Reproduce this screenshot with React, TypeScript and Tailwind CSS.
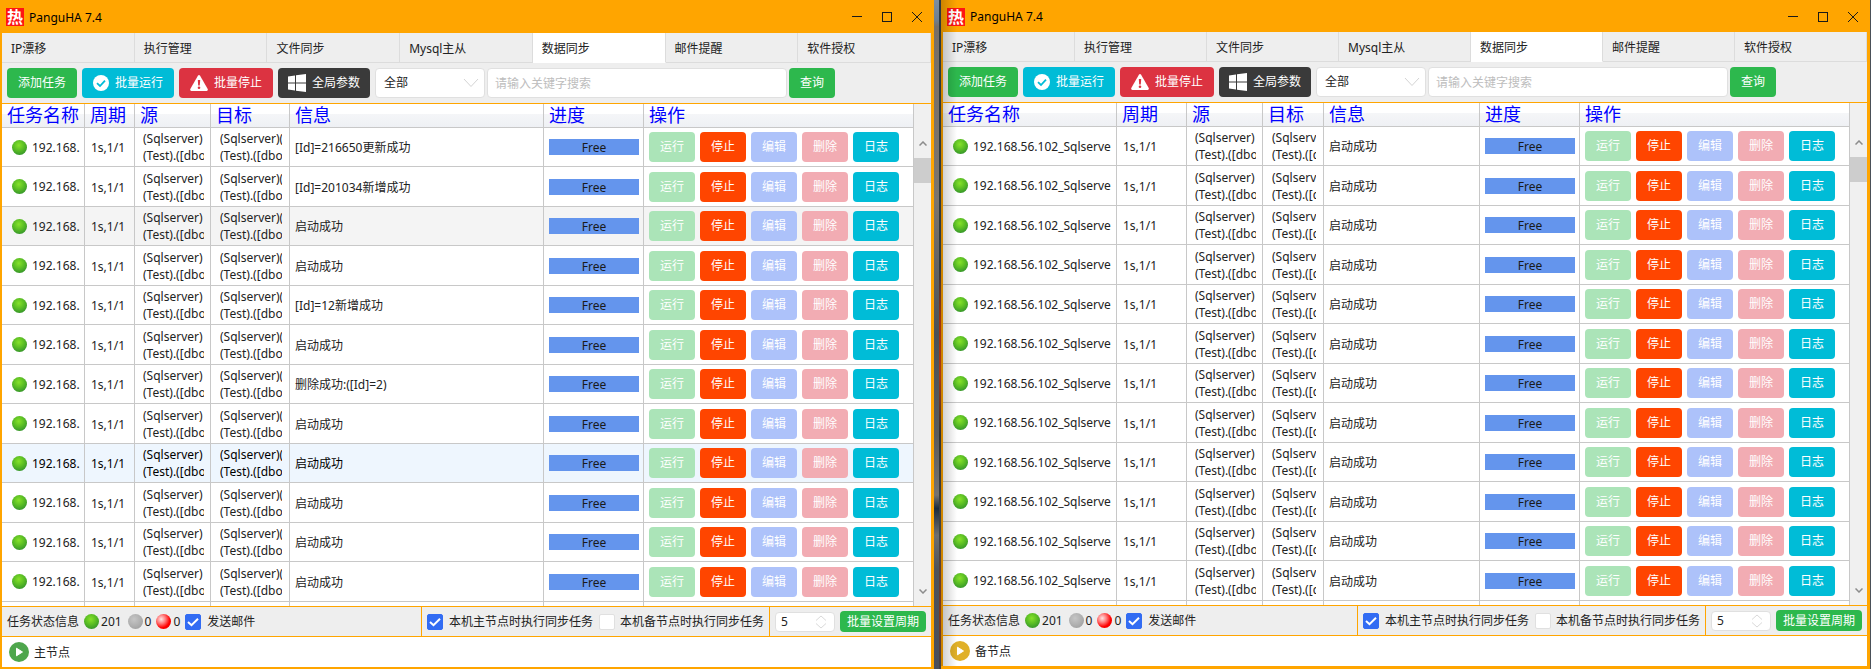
import clsx from "clsx";
import type { ReactNode } from "react";

const TABS = ["IP漂移", "执行管理", "文件同步", "Mysql主从", "数据同步", "邮件提醒", "软件授权"];
const ACTIVE_TAB = "数据同步";
const HEADERS = ["任务名称", "周期", "源", "目标", "信息", "进度", "操作"];

const ACTIONS = [
  { label: "运行", color: "bg-[#abe4b8]" },
  { label: "停止", color: "bg-[#ff4500]" },
  { label: "编辑", color: "bg-[#adc2fa]" },
  { label: "删除", color: "bg-[#f2acb3]" },
  { label: "日志", color: "bg-[#00bcd7]" },
];

const STARTED = "启动成功";

type Row = { info: string; state?: "hover" | "selected" };

const MASTER_ROWS: Row[] = [
  { info: "[Id]=216650更新成功" },
  { info: "[Id]=201034新增成功" },
  { info: STARTED, state: "hover" },
  { info: STARTED },
  { info: "[Id]=12新增成功" },
  { info: STARTED },
  { info: "删除成功:([Id]=2)" },
  { info: STARTED },
  { info: STARTED, state: "selected" },
  { info: STARTED },
  { info: STARTED },
  { info: STARTED },
];

const BACKUP_ROWS: Row[] = Array.from({ length: 12 }, () => ({ info: STARTED }));

type WindowProps = {
  id: string;
  node: string;
  nodeColor: string;
  name: string;
  target: string;
  rows: Row[];
  columns: string[];
  titleClass: string;
  frameClass: string;
  shaded?: boolean;
};

function Ball({ color }: { color: string }) {
  return <span className={clsx("block size-[15px] shrink-0 rounded-full", color)} />;
}

const GREEN_BALL = "bg-[radial-gradient(circle_at_45%_35%,#86e22a_0%,#5cbf24_40%,#2f8f2c_85%)]";
const GRAY_BALL = "bg-[radial-gradient(circle_at_40%_35%,#c6c6c6_0%,#b0b0b0_50%,#9c9c9c_90%)]";
const RED_BALL = "bg-[radial-gradient(circle_at_35%_35%,#ffe4e4_0%,#ff8080_30%,#ff0000_62%,#e00000_100%)]";

function TitleBar({ className }: { className: string }) {
  return (
    <header className={clsx("flex shrink-0 items-center bg-[#ffa500] pt-px pl-1 text-black", className)}>
      <span className="flex size-[18px] items-center justify-center bg-[#ff1414] text-[16px] leading-[18px] font-bold text-white">
        热
      </span>
      <h1 className="ml-[5px] grow pt-px">PanguHA 7.4</h1>
      <button type="button" aria-label="最小化" className="flex h-full w-[30px] items-center justify-center">
        <svg width="10" height="10" viewBox="0 0 10 10" stroke="#1a1a1a" shapeRendering="crispEdges">
          <path d="M0 4.5H10" />
        </svg>
      </button>
      <button type="button" aria-label="最大化" className="flex h-full w-[30px] items-center justify-center">
        <svg width="10" height="10" viewBox="0 0 10 10" stroke="#1a1a1a" fill="none" shapeRendering="crispEdges">
          <rect x="0.5" y="0.5" width="9" height="9" />
        </svg>
      </button>
      <button type="button" aria-label="关闭" className="flex h-full w-[29px] items-center justify-center">
        <svg width="10" height="10" viewBox="0 0 10 10" stroke="#1a1a1a">
          <path d="M0 0L10 10M10 0L0 10" />
        </svg>
      </button>
    </header>
  );
}

function Tabs() {
  return (
    <nav className="grid h-[30px] shrink-0 grid-cols-7 bg-[#eeeeee]">
      {TABS.map((tab) => (
        <a
          key={tab}
          href="#"
          className={clsx(
            "flex items-center border-r border-b pt-[2px] pl-[9px]",
            tab === ACTIVE_TAB ? "border-r-[#dcdcdc] border-b-white bg-white" : "border-[#dcdcdc]",
          )}
        >
          {tab}
        </a>
      ))}
    </nav>
  );
}

type ToolButtonProps = { color: string; padding?: string; icon?: ReactNode; children: ReactNode };

function ToolButton({ color, padding = "px-[11px]", icon, children }: ToolButtonProps) {
  return (
    <button
      type="button"
      className={clsx("flex h-[30px] shrink-0 items-center gap-[6px] rounded whitespace-nowrap text-white", padding, color)}
    >
      {icon}
      {children}
    </button>
  );
}

function Toolbar({ id }: { id: string }) {
  return (
    <div className="flex h-[41px] shrink-0 items-center border-b border-[#ffa500] bg-[#eeeeee] pl-[5px]">
      <div className="flex gap-[5px]">
        <ToolButton color="bg-[#2db84d]">添加任务</ToolButton>
        <ToolButton
          color="bg-[#00bcd7]"
          icon={
            <svg width="16" height="16" viewBox="0 0 16 16">
              <circle cx="8" cy="8" r="8" fill="#fff" />
              <path d="M4 8.2L7 11L12 5.6" fill="none" stroke="#00bcd7" strokeWidth="1.8" />
            </svg>
          }
        >
          批量运行
        </ToolButton>
        <ToolButton
          color="bg-[#dc3341]"
          icon={
            <svg width="18" height="16" viewBox="0 0 18 16">
              <path d="M7.9 0.8Q9 -0.7 10.1 0.8L17.7 14Q18.3 15.8 16.7 16H1.3Q-0.3 15.8 0.3 14Z" fill="#fff" />
              <path d="M7.8 5H10.2L9.8 10.4H8.2Z" fill="#dc3341" />
              <circle cx="9" cy="12.8" r="1.3" fill="#dc3341" />
            </svg>
          }
        >
          批量停止
        </ToolButton>
        <ToolButton
          color="bg-[#3a3a3a]"
          padding="px-[10px]"
          icon={
            <svg width="18" height="18" viewBox="0 0 18 18" fill="#fff">
              <path d="M0 2.4L7 1.4V8.5H0ZM8 1.2L18 0V8.5H8ZM0 9.5H7V16.6L0 15.6ZM8 9.5H18V18L8 16.8Z" />
            </svg>
          }
        >
          全局参数
        </ToolButton>
      </div>
      <div className="relative ml-[5px]">
        <select
          aria-label="任务类型"
          id={`${id}-type`}
          className="block h-[30px] w-[110px] appearance-none rounded border border-[#e0e0e0] bg-white pl-2"
        >
          <option>全部</option>
        </select>
        <svg
          className="pointer-events-none absolute top-[10px] right-[6px]"
          width="16"
          height="10"
          viewBox="0 0 16 10"
          fill="none"
          stroke="#d4d4d4"
        >
          <path d="M1 1L8 8.5L15 1" />
        </svg>
      </div>
      <input
        type="text"
        aria-label="关键字"
        placeholder="请输入关键字搜索"
        className="ml-[2px] h-[30px] w-[300px] min-w-0 rounded border border-[#e0e0e0] bg-white px-[7px] placeholder:text-[#bdbdbd]"
      />
      <button type="button" className="ml-[2px] h-[30px] w-[46px] shrink-0 rounded bg-[#2db84d] text-white">
        查询
      </button>
    </div>
  );
}

function TaskTable({ name, target, rows, columns }: Pick<WindowProps, "name" | "target" | "rows" | "columns">) {
  const cell = "overflow-hidden border-r border-b border-[#c8c8c8]";
  return (
    <table className="w-full table-fixed border-separate border-spacing-0">
      <colgroup>
        {columns.map((width, i) => (
          <col key={i} className={width} />
        ))}
      </colgroup>
      <thead>
        <tr className="h-6 bg-[linear-gradient(#ffffff_0%,#ffffff_40%,#f5f6f8_41%,#eef0f4_100%)]">
          {HEADERS.map((header) => (
            <th
              key={header}
              className="overflow-hidden border-r border-b border-[#c8c8c8] p-0 pl-[5px] text-left text-[18px] leading-[23px] font-normal whitespace-nowrap text-[#0000ff]"
            >
              {header}
            </th>
          ))}
        </tr>
      </thead>
      <tbody>
        {rows.map((row, i) => (
          <tr
            key={i}
            className={clsx(
              "odd:h-[39px] even:h-[40px]",
              row.state === "hover" && "bg-[#f4f4f4]",
              row.state === "selected" && "bg-[#eef6fe] text-black",
            )}
          >
            <td className={clsx(cell, "p-0")}>
              <div className="mr-1 ml-[10px] flex items-center gap-[5px] overflow-hidden whitespace-nowrap">
                <Ball color={GREEN_BALL} />
                <span className="pt-px">{name}</span>
              </div>
            </td>
            <td className={clsx(cell, "pt-[2px] pl-[6px]")}>1s,1/1</td>
            <td className={clsx(cell, "p-0")}>
              <div className="mr-[6px] ml-2 overflow-hidden leading-[17px] whitespace-nowrap">
                (Sqlserver)
                <br />
                (Test).([dbo
              </div>
            </td>
            <td className={clsx(cell, "p-0")}>
              <div className="mr-[7px] ml-[9px] overflow-hidden leading-[17px] whitespace-nowrap">
                {target}
                <br />
                (Test).([dbo
              </div>
            </td>
            <td className={clsx(cell, "pt-[2px] pl-[5px]")}>{row.info}</td>
            <td className={clsx(cell, "py-0 pr-1 pl-[5px]")}>
              <div className="h-4 bg-[#6495ed] text-center leading-[17px] text-[#1a1a1a]">Free</div>
            </td>
            <td className={clsx(cell, "py-0 pl-[5px]")}>
              <div className="flex gap-[5px]">
                {ACTIONS.map((action) => (
                  <button
                    key={action.label}
                    type="button"
                    className={clsx("h-[30px] w-[46px] rounded text-white", action.color)}
                  >
                    {action.label}
                  </button>
                ))}
              </div>
            </td>
          </tr>
        ))}
        <tr className="h-[39px]">
          {HEADERS.map((header) => (
            <td key={header} className={cell} />
          ))}
        </tr>
      </tbody>
    </table>
  );
}

function ScrollBar() {
  return (
    <div className="flex w-[17px] shrink-0 flex-col bg-[#f0f0f0] pt-6">
      <button type="button" aria-label="向上滚动" className="flex h-[30px] shrink-0 items-center justify-center">
        <svg width="8" height="5" viewBox="0 0 8 5" fill="none" stroke="#8c8c8c" strokeWidth="1.5">
          <path d="M0.5 4.5L4 1L7.5 4.5" />
        </svg>
      </button>
      <div className="h-[25px] shrink-0 bg-[#cdcdcd]" />
      <div className="grow" />
      <button type="button" aria-label="向下滚动" className="flex h-[30px] shrink-0 items-center justify-center">
        <svg width="8" height="5" viewBox="0 0 8 5" fill="none" stroke="#8c8c8c" strokeWidth="1.5">
          <path d="M0.5 0.5L4 4L7.5 0.5" />
        </svg>
      </button>
    </div>
  );
}

function Check({ label, checked, gap }: { label: string; checked?: boolean; gap: string }) {
  return (
    <label className={clsx("flex items-center whitespace-nowrap", gap)}>
      <span className="relative block size-4">
        <input
          type="checkbox"
          defaultChecked={checked}
          className="peer block size-4 appearance-none rounded-[2px] border border-[#e0e0e0] bg-white checked:border-[#326cf3] checked:bg-[#326cf3]"
        />
        <svg
          className="pointer-events-none absolute inset-0 hidden peer-checked:block"
          width="16"
          height="16"
          viewBox="0 0 16 16"
          fill="none"
          stroke="#fff"
          strokeWidth="2"
        >
          <path d="M3 8L6.5 11.2L13 4.8" />
        </svg>
      </span>
      {label}
    </label>
  );
}

function StatusBar({ id }: { id: string }) {
  return (
    <div className="flex h-[31px] shrink-0 border-y border-[#ffa500] bg-[#eeeeee]">
      <div className="flex grow items-center pl-[5px]">
        <span className="mr-[5px]">任务状态信息</span>
        <Ball color={GREEN_BALL} />
        <span className="mr-[6px] ml-[2px]">201</span>
        <Ball color={GRAY_BALL} />
        <span className="mr-[5px] ml-[2px]">0</span>
        <Ball color={RED_BALL} />
        <span className="mr-[5px] ml-[2px]">0</span>
        <Check label="发送邮件" checked gap="gap-[6px]" />
      </div>
      <div className="flex items-center gap-[6px] border-l border-[#ffa500] px-[5px]">
        <Check label="本机主节点时执行同步任务" checked gap="gap-[6px]" />
        <Check label="本机备节点时执行同步任务" gap="gap-[5px]" />
      </div>
      <div className="flex items-center gap-[5px] border-l border-[#ffa500] px-[5px]">
        <div className="relative">
          <input
            type="text"
            inputMode="numeric"
            aria-label="周期"
            id={`${id}-period`}
            defaultValue="5"
            className="block h-5 w-[60px] rounded border border-[#e0e0e0] bg-white px-[5px]"
          />
          <svg
            className="pointer-events-none absolute top-[3px] right-2"
            width="12"
            height="14"
            viewBox="0 0 12 14"
            fill="none"
            stroke="#dadada"
          >
            <path d="M1 5.5L6 1L11 5.5M1 8.5L6 13L11 8.5" />
          </svg>
        </div>
        <button type="button" className="h-[21px] w-[86px] rounded bg-[#2db84d] text-white">
          批量设置周期
        </button>
      </div>
    </div>
  );
}

function AppWindow({ id, node, nodeColor, name, target, rows, columns, titleClass, frameClass, shaded }: WindowProps) {
  return (
    <section
      aria-label={node}
      className={clsx("relative flex min-h-0 min-w-0 flex-col border-[#ffa500] bg-white text-[#222222]", frameClass)}
    >
      <TitleBar className={titleClass} />
      <Tabs />
      <Toolbar id={id} />
      <main className="flex min-h-0 grow basis-0 overflow-hidden">
        <div className="min-w-0 grow overflow-hidden">
          <TaskTable name={name} target={target} rows={rows} columns={columns} />
        </div>
        <ScrollBar />
      </main>
      <StatusBar id={id} />
      <footer className="flex h-[30px] shrink-0 items-center gap-[5px] pl-[7px]">
        <svg width="20" height="20" viewBox="0 0 20 20" className={nodeColor}>
          <circle cx="10" cy="10" r="10" fill="currentColor" />
          <path d="M7.5 6.2L13.5 10L7.5 13.8Z" fill="#fff" stroke="#fff" strokeLinejoin="round" />
        </svg>
        <span className="pt-[2px]">{node}</span>
      </footer>
      {shaded && (
        <div className="pointer-events-none absolute inset-y-0 -left-[2px] w-4 bg-linear-to-r from-black/20 to-transparent" />
      )}
    </section>
  );
}

export default function App() {
  return (
    <div className="grid h-screen min-h-[320px] grid-cols-[934fr_7px_929fr_1px] grid-rows-1 overflow-hidden bg-[#4a5058] font-['Noto_Sans','Noto_Sans_CJK_SC',sans-serif] text-[12px] leading-4">
      <AppWindow
        id="master"
        node="主节点"
        nodeColor="text-[#4ea64c]"
        name="192.168."
        target="(Sqlserver)("
        rows={MASTER_ROWS}
        columns={["w-[83px]", "w-[50px]", "w-[76px]", "w-[79px]", "", "w-[100px]", "w-[270px]"]}
        titleClass="h-[33px]"
        frameClass="border-r-[3px] border-b-2 border-l-2"
      />
      {/* desktop showing between the two windows */}
      <div className="flex">
        <div className="grow bg-[linear-gradient(#7c8fa0_0%,#6f7f90_3%,#787068_4%,#7d766e_30%,#4c5258_50%,#5c5c5c_65%,#777470_74%,#1c2c3c_76%,#707070_80%,#50545a_85%,#4a4f5c_100%)]" />
        <div className="w-[2px] bg-[linear-gradient(#2c3840_0%,#30383c_40%,#a03010_48%,#a83818_56%,#303030_65%,#404448_80%,#803820_92%,#404048_100%)]" />
      </div>
      <AppWindow
        id="backup"
        node="备节点"
        nodeColor="text-[#e0b028]"
        name="192.168.56.102_Sqlserve"
        target="(Sqlserv"
        rows={BACKUP_ROWS}
        columns={["w-[174px]", "w-[70px]", "w-[76px]", "w-[61px]", "", "w-[100px]", "w-[270px]"]}
        titleClass="h-8"
        frameClass="border-r-[3px] border-b-[3px] border-l-2"
        shaded
      />
    </div>
  );
}
